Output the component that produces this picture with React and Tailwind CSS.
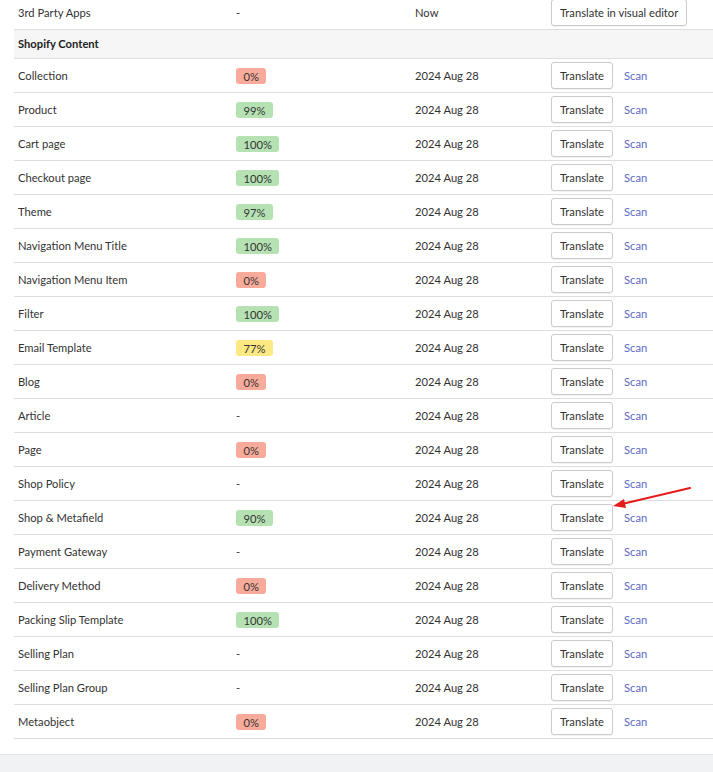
import React from "react";

const rows = [
  ["Collection", "0%", "r"],
  ["Product", "99%", "g"],
  ["Cart page", "100%", "g"],
  ["Checkout page", "100%", "g"],
  ["Theme", "97%", "g"],
  ["Navigation Menu Title", "100%", "g"],
  ["Navigation Menu Item", "0%", "r"],
  ["Filter", "100%", "g"],
  ["Email Template", "77%", "y"],
  ["Blog", "0%", "r"],
  ["Article", "-", null],
  ["Page", "0%", "r"],
  ["Shop Policy", "-", null],
  ["Shop & Metafield", "90%", "g"],
  ["Payment Gateway", "-", null],
  ["Delivery Method", "0%", "r"],
  ["Packing Slip Template", "100%", "g"],
  ["Selling Plan", "-", null],
  ["Selling Plan Group", "-", null],
  ["Metaobject", "0%", "r"],
];

const badgeCls = {
  r: "bg-[#f8ab9b]",
  g: "bg-[#b6e2b3]",
  y: "bg-[#fde984]",
};

function Btn({ children }) {
  return (
    <button className="h-[27px] px-[8px] pt-[1px] rounded-[3px] border border-[#c9cccf] bg-white text-[11.2px] text-[#333] shadow-[0_1px_0_rgba(0,0,0,0.05)] leading-none">
      {children}
    </button>
  );
}

export default function App() {
  return (
    <div
      className="w-[713px] h-[772px] overflow-hidden bg-[#f1f2f4] text-[11.2px] text-[#333]"
      style={{ fontFamily: 'Lato, "Noto Sans", sans-serif' }}
    >
      <div className="relative bg-white pl-[14px] pb-[15px] -mt-[4px] border-b border-[#e3e4e6]">
        <div className="grid grid-cols-[218px_179px_136px_1fr] items-center h-[34px] border-b border-[#dcdfe2]">
          <div className="pl-[4px] pt-[2px]">3rd Party Apps</div>
          <div className="pl-[4px] pt-[2px]">-</div>
          <div className="pl-[4px] pt-[2px]">Now</div>
          <div className="pl-[4px]">
            <Btn>Translate in visual editor</Btn>
          </div>
        </div>
        <div className="flex items-center h-[29px] pt-[1px] bg-[#f6f6f7] border-b border-[#dcdfe2] pl-[4px] font-bold text-[#222]">
          Shopify Content
        </div>
        {rows.map(([name, pct, c]) => (
          <div
            key={name}
            className="grid grid-cols-[218px_179px_136px_1fr] items-center h-[34px] border-b border-[#dcdfe2]"
          >
            <div className="pl-[4px] pt-[2px]">{name}</div>
            <div className="pl-[4px] pt-[2px]">
              {c ? (
                <span className={`inline-block h-[16px] leading-[17px] px-[7.5px] rounded-[3px] ${badgeCls[c]}`}>
                  {pct}
                </span>
              ) : (
                <span>-</span>
              )}
            </div>
            <div className="pl-[4px] pt-[2px]">2024 Aug 28</div>
            <div className="pl-[4px] flex items-center gap-[11px]">
              <Btn>Translate</Btn>
              <span className="text-[#5c6ac4] pt-[2px]">Scan</span>
            </div>
          </div>
        ))}
        <svg
          className="absolute left-[608px] top-[488px] pointer-events-none"
          width="86"
          height="30"
          viewBox="0 0 86 30"
        >
          <line x1="82" y1="4" x2="14" y2="20" stroke="#e51c1c" strokeWidth="2.2" strokeLinecap="round" />
          <polygon points="5,22 16,15 18,24" fill="#e51c1c" />
        </svg>
      </div>
    </div>
  );
}
